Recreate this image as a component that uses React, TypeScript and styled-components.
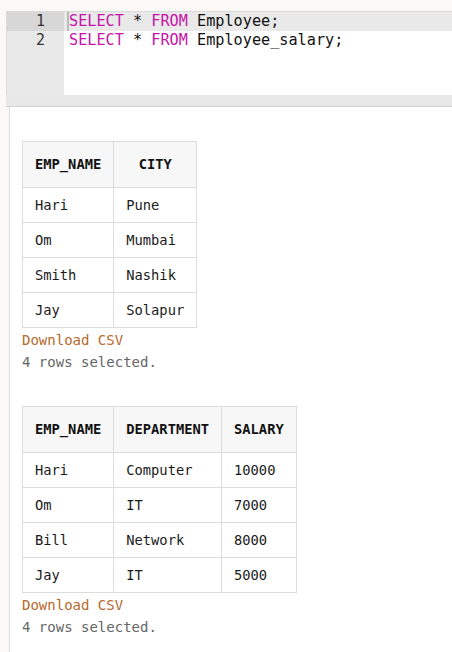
import React from "react";
import styled, { createGlobalStyle } from "styled-components";

const Global = createGlobalStyle`
  html, body { margin: 0; padding: 0; background: #faf9f7; }
  body { font-family: "DejaVu Sans Mono", "Liberation Mono", monospace; }
`;

const Page = styled.div`
  padding: 11px 0 0 6px;
  width: 452px;
  height: 652px;
  box-sizing: border-box;
  overflow: hidden;
`;

const Editor = styled.div`
  display: flex;
  height: 84px;
  border-top: 1px solid #dadada;
  border-left: 1px solid #dadada;
  background: #ffffff;
  box-sizing: border-box;
`;

const Gutter = styled.div`
  width: 57px;
  flex: none;
  background: #e9e9e9;
`;

const LineNo = styled.div<{ $active?: boolean }>`
  height: 19px;
  line-height: 19px;
  font-size: 15px;
  text-align: right;
  padding-right: 19px;
  color: #333;
  background: ${(p) => (p.$active ? "#d7d7d7" : "transparent")};
`;

const Code = styled.div`
  flex: 1;
  position: relative;
`;

const CodeLine = styled.div<{ $active?: boolean }>`
  height: 19px;
  line-height: 19px;
  font-size: 15.2px;
  padding-left: 5px;
  white-space: pre;
  color: #111;
  background: ${(p) => (p.$active ? "#e9e9e9" : "transparent")};
`;

const Cursor = styled.span`
  position: absolute;
  left: 3px;
  top: 0;
  width: 2px;
  height: 19px;
  background: #bbb;
`;

const Kw = styled.span`
  color: #c713a9;
`;

const ScrollBar = styled.div`
  height: 11px;
  background: #e8e8e8;
  border-bottom: 1px solid #d2d2d2;
`;

const Results = styled.div`
  margin-left: 3px;
  border-left: 1px solid #dcdcdc;
  background: #ffffff;
  padding: 1px 0 40px 12px;
  min-height: 560px;
`;

const ResultBlock = styled.div`
  margin-top: 33px;
`;

const Table = styled.table`
  border-collapse: collapse;
  font-size: 13.75px;
  color: #1a1a1a;
`;

const Th = styled.th`
  background: #f7f7f7;
  border: 1px solid #dcdcdc;
  padding: 14px 12px;
  line-height: 17px;
  font-weight: bold;
  text-align: center;
  color: #111;
`;

const Td = styled.td`
  border: 1px solid #dcdcdc;
  padding: 8px 12px;
  line-height: 18px;
  text-align: left;
`;

const Download = styled.div`
  font-size: 14px;
  line-height: 22px;
  margin-top: 1px;
  color: #b8692e;
`;

const Status = styled.div`
  font-size: 14px;
  line-height: 22px;
  color: #666;
`;

type Result = { cols: string[]; rows: string[][] };

const results: Result[] = [
  {
    cols: ["EMP_NAME", "CITY"],
    rows: [
      ["Hari", "Pune"],
      ["Om", "Mumbai"],
      ["Smith", "Nashik"],
      ["Jay", "Solapur"],
    ],
  },
  {
    cols: ["EMP_NAME", "DEPARTMENT", "SALARY"],
    rows: [
      ["Hari", "Computer", "10000"],
      ["Om", "IT", "7000"],
      ["Bill", "Network", "8000"],
      ["Jay", "IT", "5000"],
    ],
  },
];

export default function App() {
  return (
    <>
      <Global />
      <Page>
        <Editor>
          <Gutter>
            <LineNo $active>1</LineNo>
            <LineNo>2</LineNo>
          </Gutter>
          <Code>
            <Cursor />
            <CodeLine $active>
              <Kw>SELECT</Kw> * <Kw>FROM</Kw> Employee;
            </CodeLine>
            <CodeLine>
              <Kw>SELECT</Kw> * <Kw>FROM</Kw> Employee_salary;
            </CodeLine>
          </Code>
        </Editor>
        <ScrollBar />
        <Results>
          {results.map((r, i) => (
            <ResultBlock key={i}>
              <Table>
                <thead>
                  <tr>
                    {r.cols.map((c) => (
                      <Th key={c}>{c}</Th>
                    ))}
                  </tr>
                </thead>
                <tbody>
                  {r.rows.map((row, j) => (
                    <tr key={j}>
                      {row.map((cell, k) => (
                        <Td key={k}>{cell}</Td>
                      ))}
                    </tr>
                  ))}
                </tbody>
              </Table>
              <Download>Download CSV</Download>
              <Status>{r.rows.length} rows selected.</Status>
            </ResultBlock>
          ))}
        </Results>
      </Page>
    </>
  );
}
